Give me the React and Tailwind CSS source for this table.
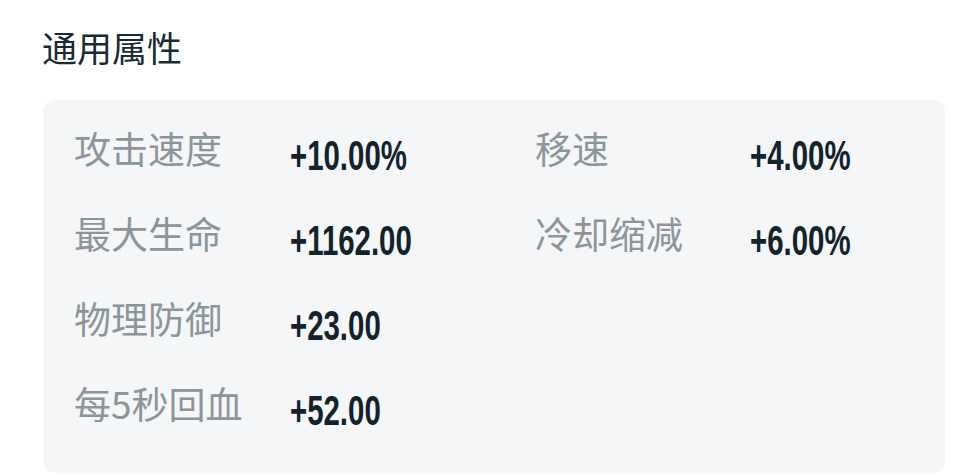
const STATS = [
  ['攻击速度', '+10.00%', '移速', '+4.00%'],
  ['最大生命', '+1162.00', '冷却缩减', '+6.00%'],
  ['物理防御', '+23.00'],
  ['每5秒回血', '+52.00'],
]

const cjk = { fontFamily: '"Noto Sans CJK SC", "Noto Sans", sans-serif' }
const num = { fontFamily: '"Liberation Sans", Arial, sans-serif' }

function Label({ children }) {
  return (
    <div className="text-[37px] leading-none text-[#8c959a] -translate-y-[1px]" style={cjk}>
      {children}
    </div>
  )
}

function Value({ children }) {
  return (
    <div
      className="text-[42px] leading-none font-bold text-[#13232c] whitespace-nowrap origin-left scale-x-[0.7] translate-y-[4px]"
      style={num}
    >
      {children}
    </div>
  )
}

export default function App() {
  return (
    <div className="w-[964px] h-[474px] bg-white overflow-hidden">
      <div className="pl-[42px] pt-[26px]">
        <h2 className="text-[35px] leading-[42px] text-[#1a2a33] font-normal" style={cjk}>通用属性</h2>
      </div>

      <div className="ml-[43px] mt-[32px] w-[902px] h-[373px] rounded-[12px] bg-[#f4f6f8] pl-[31px] pt-[31px]">
        <div className="grid grid-cols-[216px_245px_215px_1fr] auto-rows-[85px] items-start">
          {STATS.map((row, i) => (
            <div key={i} className="contents">
              <Label>{row[0]}</Label>
              <Value>{row[1]}</Value>
              {row[2] ? <Label>{row[2]}</Label> : <div />}
              {row[3] ? <Value>{row[3]}</Value> : <div />}
            </div>
          ))}
        </div>
      </div>
    </div>
  )
}
